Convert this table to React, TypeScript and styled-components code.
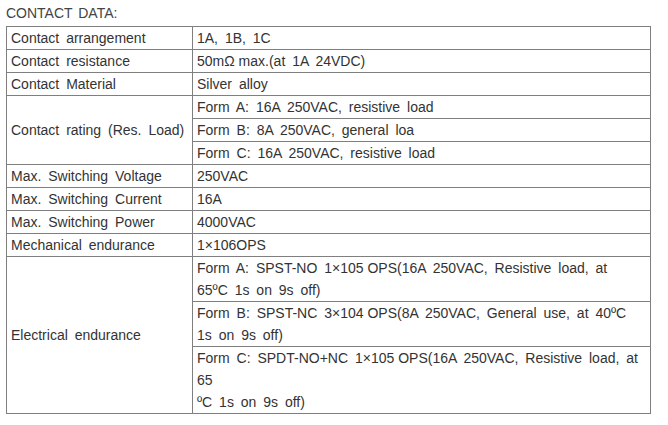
import React from "react";
import styled, { createGlobalStyle } from "styled-components";

const Global = createGlobalStyle`
  html, body { margin: 0; padding: 0; background: #ffffff; }
  body { font-family: "Liberation Sans", Arial, sans-serif; color: #333333; }
`;

const Page = styled.div`
  padding: 0 0 0 6px;
  width: 668px;
  box-sizing: border-box;
`;

const Title = styled.div`
  font-size: 14px;
  line-height: 26px;
  height: 26px;
  color: #444444;
  word-spacing: 2px;
`;

const Table = styled.table`
  border-collapse: collapse;
  width: 645px;
  font-size: 14px;
  line-height: 22px;
  color: #333333;
  word-spacing: 3px;
  table-layout: fixed;
`;

const LabelCol = styled.col`
  width: 186px;
`;

const Cell = styled.td`
  border: 1px solid #7f7f7f;
  padding: 0 0 0 4px;
  vertical-align: middle;
  white-space: nowrap;
`;

const Tight = styled.span`
  word-spacing: 0;
`;

type Row = { label?: string; span?: number; value: React.ReactNode };

const rows: Row[] = [
  { label: "Contact arrangement", value: "1A, 1B, 1C" },
  { label: "Contact resistance", value: <><Tight>50mΩ max.</Tight>(at 1A 24VDC)</> },
  { label: "Contact Material", value: "Silver alloy" },
  { label: "Contact rating (Res. Load)", span: 3, value: "Form A: 16A 250VAC, resistive load" },
  { value: "Form B: 8A 250VAC, general loa" },
  { value: "Form C: 16A 250VAC, resistive load" },
  { label: "Max. Switching Voltage", value: "250VAC" },
  { label: "Max. Switching Current", value: "16A" },
  { label: "Max. Switching Power", value: "4000VAC" },
  { label: "Mechanical endurance", value: "1×106OPS" },
  {
    label: "Electrical endurance",
    span: 3,
    value: (
      <>
        Form A: SPST-NO <Tight>1×105 OPS</Tight>(16A 250VAC, Resistive load, at
        <br />
        65ºC 1s on 9s off)
      </>
    ),
  },
  {
    value: (
      <>
        Form B: SPST-NC <Tight>3×104 OPS</Tight>(8A 250VAC, General use, at 40ºC
        <br />
        1s on 9s off)
      </>
    ),
  },
  {
    value: (
      <>
        Form C: SPDT-NO+NC <Tight>1×105 OPS</Tight>(16A 250VAC, Resistive load, at
        <br />
        65
        <br />
        ºC 1s on 9s off)
      </>
    ),
  },
];

export default function App() {
  return (
    <Page>
      <Global />
      <Title>CONTACT DATA:</Title>
      <Table>
        <colgroup>
          <LabelCol />
          <col />
        </colgroup>
        <tbody>
          {rows.map((r, i) => (
            <tr key={i}>
              {r.label !== undefined && <Cell rowSpan={r.span ?? 1}>{r.label}</Cell>}
              <Cell>{r.value}</Cell>
            </tr>
          ))}
        </tbody>
      </Table>
    </Page>
  );
}
